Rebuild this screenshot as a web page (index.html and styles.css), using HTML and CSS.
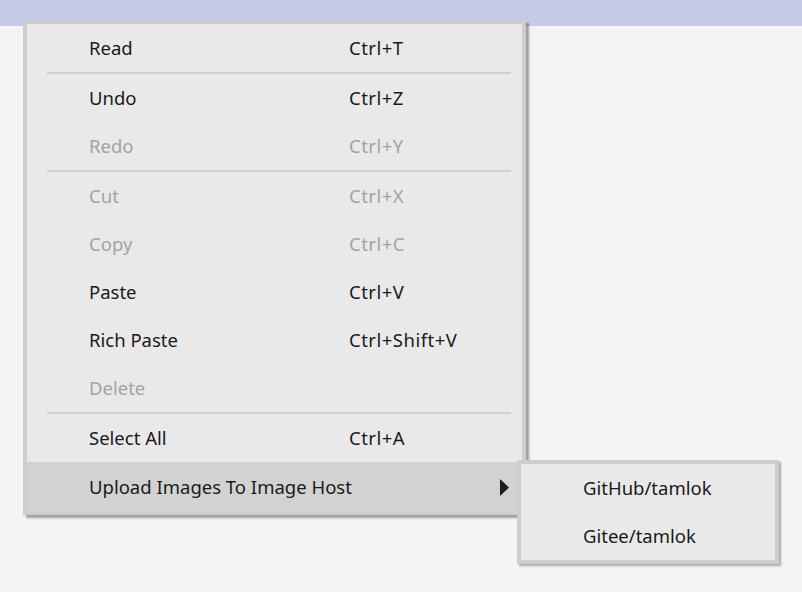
FILE: index.html
```html
<!DOCTYPE html>
<html>
<head>
<meta charset="utf-8">
<link rel="stylesheet" href="styles.css">
</head>
<body>
<div class="topbar"></div>
<div class="menu">
  <div class="item"><span class="label">Read</span><span class="key">Ctrl+T</span></div>
  <div class="sep"></div>
  <div class="item"><span class="label">Undo</span><span class="key">Ctrl+Z</span></div>
  <div class="item disabled"><span class="label">Redo</span><span class="key">Ctrl+Y</span></div>
  <div class="sep"></div>
  <div class="item disabled"><span class="label">Cut</span><span class="key">Ctrl+X</span></div>
  <div class="item disabled"><span class="label">Copy</span><span class="key">Ctrl+C</span></div>
  <div class="item"><span class="label">Paste</span><span class="key">Ctrl+V</span></div>
  <div class="item"><span class="label">Rich Paste</span><span class="key">Ctrl+Shift+V</span></div>
  <div class="item disabled"><span class="label">Delete</span><span class="key"></span></div>
  <div class="sep"></div>
  <div class="item"><span class="label">Select All</span><span class="key">Ctrl+A</span></div>
  <div class="item active last"><span class="label">Upload Images To Image Host</span><span class="key"></span>
    <svg class="arrow" width="9" height="17" viewBox="0 0 9 17"><polygon points="0,0 9,8.5 0,17" fill="#1e1e1e"/></svg>
  </div>
</div>
<div class="submenu">
  <div class="subitem">GitHub/tamlok</div>
  <div class="subitem">Gitee/tamlok</div>
</div>
</body>
</html>
```
FILE: styles.css
```css
html, body {
  margin: 0;
  padding: 0;
  background: #f4f4f4;
  width: 802px;
  height: 592px;
  overflow: hidden;
  font-family: "Noto Sans", "Open Sans", sans-serif;
  font-size: 18.5px;
  color: #1a1a1a;
}
.topbar {
  height: 26px;
  background: #c6c9e8;
}
.menu {
  position: absolute;
  left: 23px;
  top: 20px;
  width: 495px;
  background: #e9e9e9;
  border: 4px solid #cecece;
  box-shadow: 3px 3px 2px rgba(0, 0, 0, 0.35);
}
.item {
  position: relative;
  display: grid;
  grid-template-columns: 260px auto;
  align-items: center;
  height: 48px;
  padding-left: 62px;
  padding-bottom: 1px;
  box-sizing: border-box;
  white-space: nowrap;
}
.item .key {
  letter-spacing: 0.5px;
}
.item.last {
  height: 49px;
  padding-top: 1px;
}
.item.disabled {
  color: #a3a3a3;
}
.item.active {
  background: #d2d2d2;
}
.arrow {
  position: absolute;
  left: 473px;
  top: 17px;
}
.sep {
  height: 2px;
  background: #d0d0d0;
  margin: 0 11px 0 20px;
}
.submenu {
  position: absolute;
  left: 517px;
  top: 460px;
  width: 254px;
  background: #e9e9e9;
  border: 4px solid #cecece;
  box-shadow: 2px 2px 2px rgba(0, 0, 0, 0.3);
  white-space: nowrap;
}
.subitem {
  height: 48px;
  line-height: 47px;
  padding-left: 62px;
}
```
